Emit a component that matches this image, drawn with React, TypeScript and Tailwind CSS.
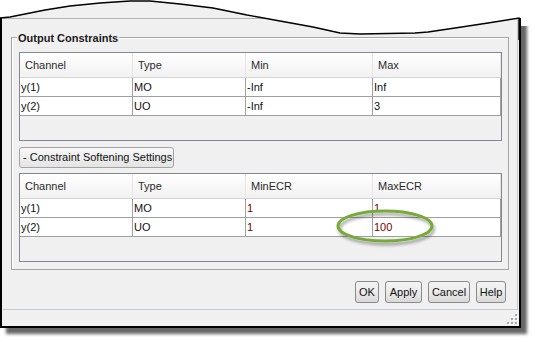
import type { ReactNode } from "react"

// Column widths shared by both tables (cell width includes its right border)
const colW = ["w-[113px]", "w-[113px]", "w-[127px]", "w-[128px]"]

interface TableProps {
  cols: string[]
  rows: string[][]
  accent?: boolean
}

const Table = ({ cols, rows, accent }: TableProps) => {
  return (
    <div className="ml-[7px] w-[483px] h-[89px] border border-[#828790] bg-[#f0f0f0]">
      <div className="flex h-[25px] border-b border-[#d5d5d5] bg-gradient-to-b from-white to-[#f1f1f1]">
        {cols.map((c, i) => (
          <div key={c} className={`${colW[i]} flex items-center pl-[5px] border-r border-[#e4e4e4] text-[#2b2b2b]`}>
            {c}
          </div>
        ))}
      </div>
      {rows.map((row) => (
        <div key={row[0]} className="flex h-[19px] border-b border-[#a0a0a0] bg-white">
          {row.map((cell, i) => (
            <div
              key={i}
              className={`${colW[i]} flex items-center pl-px border-r border-[#a0a0a0] ${
                accent && i > 1 ? "text-[#750000]" : "text-[#111]"
              }`}
            >
              {cell}
            </div>
          ))}
        </div>
      ))}
    </div>
  )
}

const Btn = ({ children, w }: { children: ReactNode; w: string }) => (
  <button
    className={`${w} h-[22px] rounded-[3px] border border-[#8a8a8a] bg-gradient-to-b from-[#f4f4f4] via-[#ebebeb] to-[#d9d9d9] text-[#111] flex items-center justify-center`}
  >
    {children}
  </button>
)

export default function App() {
  return (
    <div className="relative w-[535px] h-[342px] bg-white overflow-hidden font-['Liberation_Sans',Arial,sans-serif] text-[11px] leading-[13px]">
      {/* dialog */}
      <div className="flex flex-col pt-[18px] w-[521px] h-[328px] border-l-2 border-r-2 border-b-2 border-black bg-[#f0f0f0] shadow-[6px_6px_3px_rgba(0,0,0,0.6)]">
        <div className="ml-px mr-px w-[515px] h-[292px] border-t border-r border-b border-t-[#b4b4b4] border-r-[#c8c8c8] border-b-[#c3cbd3]">
          {/* group box */}
          <div className="relative ml-[8px] mt-[18px] w-[498px] h-[233px] border border-[#a5a5a5] shadow-[inset_1px_1px_0_#fff]">
            <span className="absolute -top-[7px] left-[5px] px-px bg-[#f0f0f0] font-bold text-[#1a1a1a] leading-[14px]">
              Output Constraints
            </span>
            <div className="pt-[14px]">
              <Table
                cols={["Channel", "Type", "Min", "Max"]}
                rows={[
                  ["y(1)", "MO", "-Inf", "Inf"],
                  ["y(2)", "UO", "-Inf", "3"],
                ]}
              />
              <button className="ml-[7px] mt-[6px] w-[155px] h-[21px] rounded-[3px] border border-[#a3a3a3] bg-gradient-to-b from-[#f7f7f7] to-[#e4e4e4] text-left pl-[3px] text-[#111]">
                - Constraint Softening Settings
              </button>
              <div className="mt-[5px]">
                <Table
                  accent
                  cols={["Channel", "Type", "MinECR", "MaxECR"]}
                  rows={[
                    ["y(1)", "MO", "1", "1"],
                    ["y(2)", "UO", "1", "100"],
                  ]}
                />
              </div>
            </div>
          </div>
          {/* dialog buttons */}
          <div className="mt-[11px] pr-[11px] flex justify-end gap-[6px]">
            <Btn w="w-[24px]">OK</Btn>
            <Btn w="w-[37px]">Apply</Btn>
            <Btn w="w-[42px]">Cancel</Btn>
            <Btn w="w-[30px]">Help</Btn>
          </div>
        </div>
        {/* status bar with size grip */}
        <div className="h-[16px] flex justify-end items-end pr-[1px] pb-px">
          <svg width="12" height="12" viewBox="0 0 12 12">
            {[
              [9, 1],
              [5, 5],
              [9, 5],
              [1, 9],
              [5, 9],
              [9, 9],
            ].map(([x, y]) => (
              <g key={`${x}-${y}`}>
                <rect x={x + 1} y={y + 1} width="2" height="2" fill="#fff" />
                <rect x={x} y={y} width="2" height="2" fill="#a3a9b1" />
              </g>
            ))}
          </svg>
        </div>
      </div>

      {/* torn top edge */}
      <svg className="absolute left-0 top-0" width="535" height="40" viewBox="0 0 535 40">
        <polygon
          fill="#fff"
          points="0,0 0,18 10,17 25,14 45,10 70,6 100,3 130,1 150,1 180,4 213,8 247,15 280,21 313,27 340,33 360,34 415,33 428,32 455,28 488,23 519,18 521,18 521,26 535,26 535,0"
        />
        <polyline
          fill="none"
          stroke="#000"
          strokeWidth="1.4"
          points="0,18 10,17 25,14 45,10 70,6 100,3 130,1 150,1 180,4 213,8 247,15 280,21 313,27 340,33 360,34 415,33 428,32 455,28 488,23 519,18 519,40"
        />
      </svg>

      {/* green highlight ellipse */}
      <svg className="absolute left-[330px] top-[203px]" width="112" height="48" viewBox="0 0 112 48">
        <defs>
          <filter id="sh" x="-20%" y="-40%" width="140%" height="180%">
            <feDropShadow dx="1.5" dy="3" stdDeviation="1.8" floodColor="#000" floodOpacity="0.35" />
          </filter>
        </defs>
        <ellipse cx="55" cy="23" rx="47" ry="15" fill="none" stroke="#77aa3a" strokeWidth="3" filter="url(#sh)" />
      </svg>
    </div>
  )
}
